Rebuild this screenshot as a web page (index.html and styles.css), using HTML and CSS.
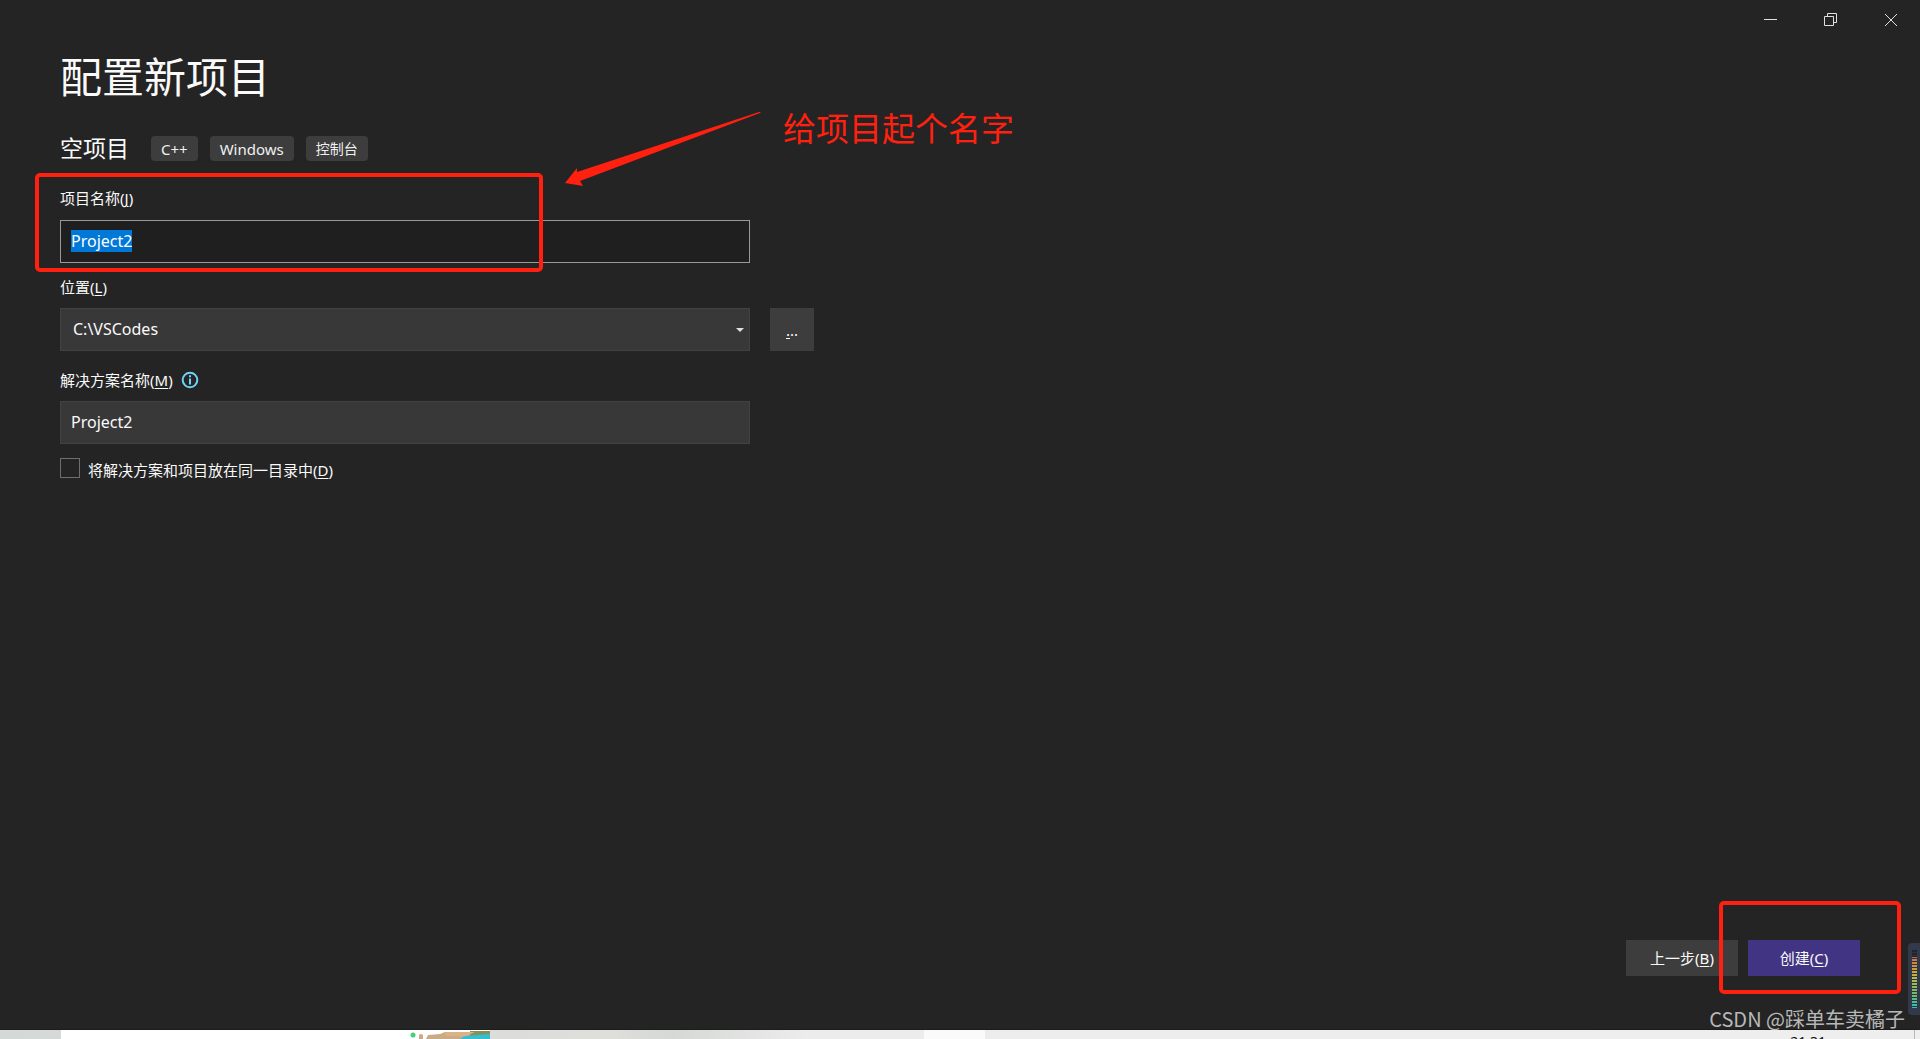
FILE: index.html
```html
<!DOCTYPE html>
<html lang="zh-CN">
<head>
<meta charset="utf-8">
<title>配置新项目</title>
<link rel="stylesheet" href="styles.css">
</head>
<body>
<div class="window">
  <header class="titlebar">
    <button class="caption" type="button" aria-label="最小化"><svg width="16" height="16" viewBox="0 0 16 16"><path d="M2 7.500h13"/></svg></button>
    <button class="caption" type="button" aria-label="还原"><svg width="16" height="16" viewBox="0 0 16 16"><path d="M2.500 4.500h9v9h-9zM5.500 4.500v-3h9v9h-3"/></svg></button>
    <button class="caption" type="button" aria-label="关闭"><svg width="16" height="16" viewBox="0 0 16 16"><path d="M3 2l12 12M15 2L3 14"/></svg></button>
  </header>
  <form class="content">
    <h1>配置新项目</h1>
    <div class="template">
      <h2>空项目</h2>
      <ul class="tags"><li>C++</li><li>Windows</li><li>控制台</li></ul>
    </div>
    <div class="field field-name">
      <label for="name">项目名称(<u>J</u>)</label>
      <input id="name" class="box box-active" type="text" value="Project2">
    </div>
    <div class="field field-location">
      <label for="location">位置(<u>L</u>)</label>
      <div class="row">
        <div class="combo">
          <select id="location" class="box"><option>C:\VSCodes</option></select>
          <svg class="chevron" width="8" height="4" viewBox="0 0 8 4"><path d="M0 0h8L4 4z"/></svg>
        </div>
        <button class="browse" type="button" aria-label="浏览"><u>.</u>..</button>
      </div>
    </div>
    <div class="field field-solution">
      <label for="solution">解决方案名称(<u>M</u>)
        <svg class="info" width="18" height="18" viewBox="0 0 18 18"><circle cx="9" cy="9" r="7.300"/><path d="M9 7.500v6M9 4.300v2"/></svg>
      </label>
      <input id="solution" class="box" type="text" value="Project2">
    </div>
    <div class="check">
      <input id="same" type="checkbox">
      <label for="same">将解决方案和项目放在同一目录中(<u>D</u>)</label>
    </div>
    <footer class="actions">
      <button type="button">上一步(<u>B</u>)</button>
      <button type="submit" class="primary">创建(<u>C</u>)</button>
    </footer>
  </form>
  <div class="mark mark-name"></div>
  <div class="mark mark-create"></div>
  <svg class="arrow" width="202" height="80" viewBox="0 0 202 80"><path d="M5 75L17 60V64L199 4Q202 3 200 5L20 73L23 78Z"/></svg>
  <p class="note">给项目起个名字</p>
  <div class="meter"><div class="bars"></div></div>
  <p class="watermark">CSDN @踩单车卖橘子</p>
</div>
<div class="desktop">
  <div class="page"><svg width="80" height="9" viewBox="0 0 80 9"><circle cx="3" cy="5" r="2.500" fill="#43d17a"/><path d="M9 9V5q2-2 4 0v4zM16 9l2-4 12-1 5-2h28v7z" fill="#c9ab86"/><path d="M60 1h20v5H60z" fill="#859257"/><path d="M50 9l5-3 25-2v5z" fill="#35bfd0"/><path d="M34 2h31l-9 4H36z" fill="#dcb187"/></svg></div>
  <div class="light"></div>
  <p class="clock">21:31</p>
</div>
<script src="script.js"></script>
</body>
</html>
```
FILE: styles.css
```css
* { box-sizing: border-box; }
body {
  margin: 0;
  min-height: 100vh;
  display: flex;
  flex-direction: column;
  background: #242424;
  color: #fafafa;
  font: 15px/20px "Noto Sans", "Noto Sans CJK SC", sans-serif;
}
h1, h2, p, ul { margin: 0; padding: 0; font-weight: 400; }
button, input, select { font: inherit; color: inherit; margin: 0; }
button { border: 0; padding: 0; background: #3d3d3d; }
u { text-underline-offset: 2px; }
.window { position: relative; flex: 1; display: flex; flex-direction: column; border-bottom: 1px solid #1c1c1c; }
.titlebar { display: flex; justify-content: flex-end; height: 40px; }
.caption { width: 60px; display: grid; place-items: center; background: none; }
.caption svg { fill: none; stroke: #e0e0e0; }
.content { flex: 1; display: flex; flex-direction: column; padding: 7px 60px 53px; }
h1 { font-size: 42px; line-height: 60px; }
.template { display: flex; align-items: center; gap: 22px; margin-top: 25px; height: 32px; }
h2 { font-size: 23px; line-height: 32px; }
.tags { display: flex; gap: 12px; list-style: none; }
.tags li { padding: 0 10px; height: 25px; line-height: 26px; border-radius: 4px; background: #3d3d3d; font-size: 15px; color: #f0f0f0; }
.tags li:last-child { font-size: 14px; }
.field { display: flex; flex-direction: column; width: 690px; }
.field label { display: flex; align-items: center; }
.field-name { margin-top: 24px; gap: 12px; }
.field-location { margin-top: 14px; gap: 11px; }
.field-solution { margin-top: 19px; gap: 11px; }
.box { display: block; width: 100%; height: 43px; padding: 0 10px 2px; border: 1px solid #424242; border-radius: 0; background: #383838; outline: 0; appearance: none; font-size: 16px; }
select.box { padding: 0 12px 2px; }
.box-active { background: #1f1f1f; border-color: #999; }
.box::selection { background: #0078d7; color: #fff; }
.row { display: flex; gap: 20px; }
.combo { position: relative; flex: 0 0 100%; }
.chevron { position: absolute; right: 6px; top: 20px; fill: #e0e0e0; }
.browse { flex: 0 0 44px; height: 43px; }
.info { margin-left: 8px; fill: none; stroke: #6fd3f5; stroke-width: 2; }
.check { display: flex; align-items: flex-start; gap: 8px; margin-top: 14px; }
.check input { appearance: none; width: 20px; height: 20px; border: 1px solid #6e6e6e; background: #242424; }
.check label { line-height: 24px; }
.actions { display: flex; justify-content: flex-end; gap: 10px; margin-top: auto; }
.actions button { width: 112px; height: 36px; }
.actions .primary { background: #413482; }
/* Annotations drawn over the window */
.mark { position: absolute; border: 4px solid #ff2010; border-radius: 5px; }
.mark-name { left: 35px; top: 173px; width: 508px; height: 99px; }
.mark-create { right: 19px; bottom: 35px; width: 182px; height: 93px; }
.arrow { position: absolute; left: 560px; top: 108px; fill: #ff2010; }
.note { position: absolute; left: 783px; top: 105px; font-size: 33px; line-height: 48px; color: #ff2010; }
.meter { position: absolute; right: 0; bottom: 14px; width: 12px; height: 72px; padding: 7px 3px 7px 4px; border-radius: 4px 0 0 4px; background: #31394a; }
.bars { height: 100%; background: repeating-linear-gradient(transparent 0 2px, #2b3240 2px 3px), linear-gradient(#20242e 0 12%, #d0694a 13%, #d09a3a 30%, #c0b840 48%, #7fb85a 70%, #30c0b0 100%); }
.watermark { position: absolute; right: 15px; bottom: -4px; font: 20px/28px "Noto Sans CJK SC", sans-serif; color: #b8b8b8; }
.desktop { position: relative; display: flex; height: 9px; padding-left: 61px; overflow: hidden; background: linear-gradient(90deg, #d4d8d7 0, #dededb 32%, #d5d8d5 35%, #ececec 42%, #eee 100%); }
.desktop::after { content: ""; width: 1px; margin: 0 5px 0 auto; background: #bbb; }
.page { display: flex; justify-content: flex-end; width: 429px; background: #fff; }
.light { width: 61px; margin-left: 434px; background: #fafafa; }
.clock { position: absolute; right: 94px; top: 5px; font-size: 14px; line-height: 14px; color: #111; }
```
FILE: script.js
```js
// The project name starts out selected, ready to be typed over.
const nameBox = document.getElementById("name");
nameBox.focus();
nameBox.select();
```
